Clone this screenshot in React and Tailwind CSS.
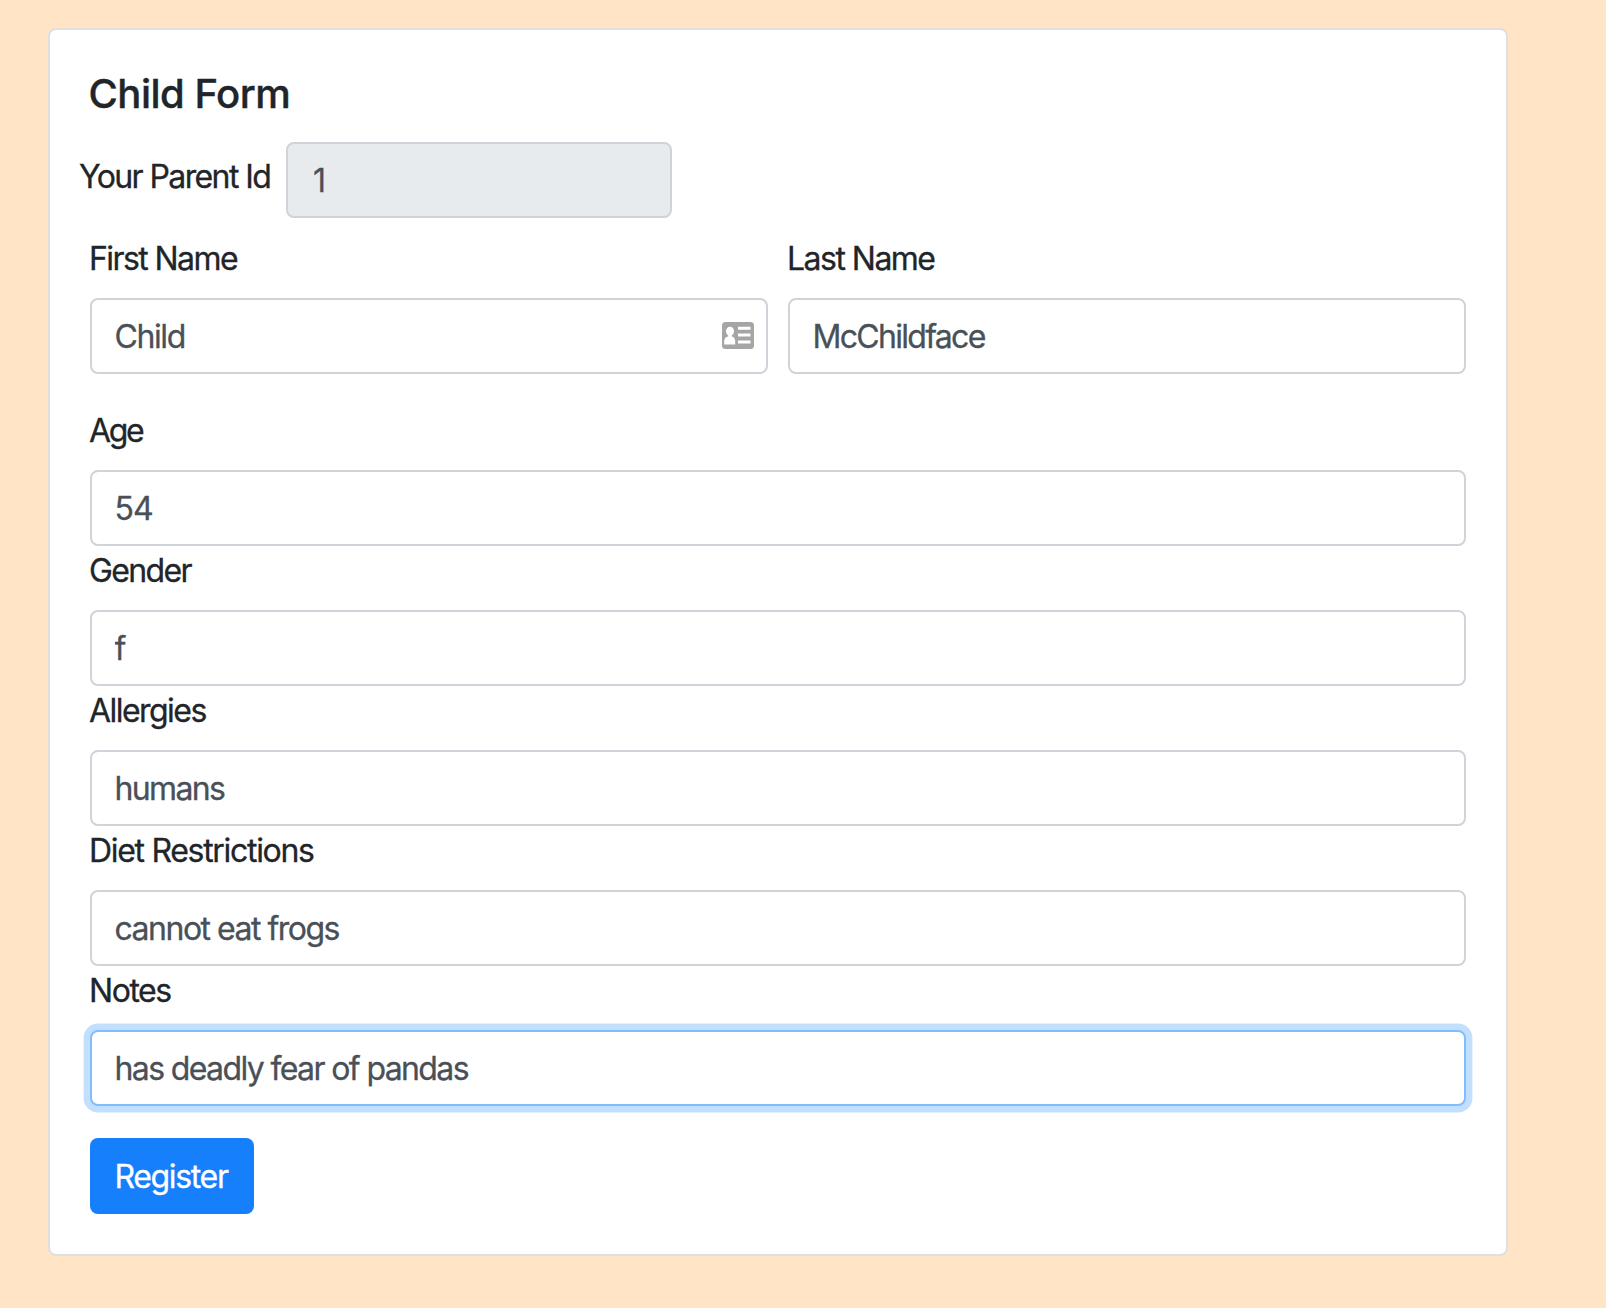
const inputBase =
  "block h-[76px] rounded-lg border-2 pt-px pr-6 text-[32px] leading-[48px] text-[#495057] outline-none [-webkit-text-stroke:0.3px]";

function Label({ text, tracking, className = "" }) {
  return (
    <label
      className={`block h-12 whitespace-nowrap text-[32px] leading-[50px] [-webkit-text-stroke:0.3px] ${tracking} ${className}`}
    >
      {text}
    </label>
  );
}

function Field({ label, labelTracking, value, valueTracking, focused, children }) {
  return (
    <div>
      <Label text={label} tracking={labelTracking} className="-ml-px mb-4" />
      <div className="relative">
        <input
          readOnly
          value={value}
          className={`${inputBase} w-full bg-white pl-[22.5px] ${valueTracking} ${
            focused ? "border-[#80bdff] shadow-[0_0_0_6.4px_#c3dffe]" : "border-[#ced4da]"
          }`}
        />
        {children}
      </div>
    </div>
  );
}

function ContactCardIcon() {
  return (
    <svg className="absolute right-[14px] top-6 h-[27px] w-8" viewBox="0 0 32 27">
      <rect width="32" height="27" rx="3.5" fill="#a5a5a5" />
      <g fill="#fff">
        <ellipse cx="8" cy="9.2" rx="4" ry="4.5" />
        <path d="M6.3 12h3.4v2.2c2.200.8 3.500 2.400 3.500 5v3.300H2.200v-3.300c0-2.600 1.500-4.200 4.100-5z" />
        <path d="M16 4.700h12.500v3H16zM16 11.500h12.500v3H16zM16 18.500h12.500v3H16z" />
      </g>
    </svg>
  );
}

export default function App() {
  return (
    <div className="h-[1308px] bg-[#ffe4c6] pl-12 pt-7 font-['Inter',sans-serif] text-[#212529]">
      <form className="h-[1228px] w-[1460px] rounded-lg border-2 border-[#dfdfdf] bg-white p-10">
        <h1 className="-ml-[1.5px] mb-6 h-12 text-[40px] font-medium leading-[48px] tracking-[-0.5px] [-webkit-text-stroke:0.4px]">
          Child Form
        </h1>
        <div className="-ml-[11px] mb-4 flex">
          <Label text="Your Parent Id" tracking="tracking-[-1.6px]" className="mt-2.5 w-[207px]" />
          <input
            readOnly
            value="1"
            className={`${inputBase} w-[386px] border-[#ced4da] bg-[#e8ebee] pl-[25px]`}
          />
        </div>
        <div className="mb-8 grid grid-cols-2 gap-5">
          <Field label="First Name" labelTracking="tracking-[-1.58px]" value="Child" valueTracking="tracking-[-1.4px]">
            <ContactCardIcon />
          </Field>
          <Field label="Last Name" labelTracking="tracking-[-1.52px]" value="McChildface" valueTracking="tracking-[-1.7px]" />
        </div>
        <div className="flex flex-col">
          <Field label="Age" labelTracking="tracking-[-2.3px]" value="54" valueTracking="tracking-[-1px]" />
          <Field label="Gender" labelTracking="tracking-[-1.65px]" value="f" valueTracking="tracking-normal" />
          <Field label="Allergies" labelTracking="tracking-[-1.55px]" value="humans" valueTracking="tracking-[-1.65px]" />
          <Field label="Diet Restrictions" labelTracking="tracking-[-1.31px]" value="cannot eat frogs" valueTracking="tracking-[-1.5px]" />
          <Field label="Notes" labelTracking="tracking-[-1.45px]" value="has deadly fear of pandas" valueTracking="tracking-[-1.62px]" focused />
        </div>
        <button
          type="button"
          className="mt-8 block h-[76px] w-[164px] rounded-lg bg-[#167ffc] pl-[24.5px] pt-0.5 text-left text-[32px] leading-[48px] tracking-[-1.35px] text-white [-webkit-text-stroke:0.3px]"
        >
          Register
        </button>
      </form>
    </div>
  );
}
